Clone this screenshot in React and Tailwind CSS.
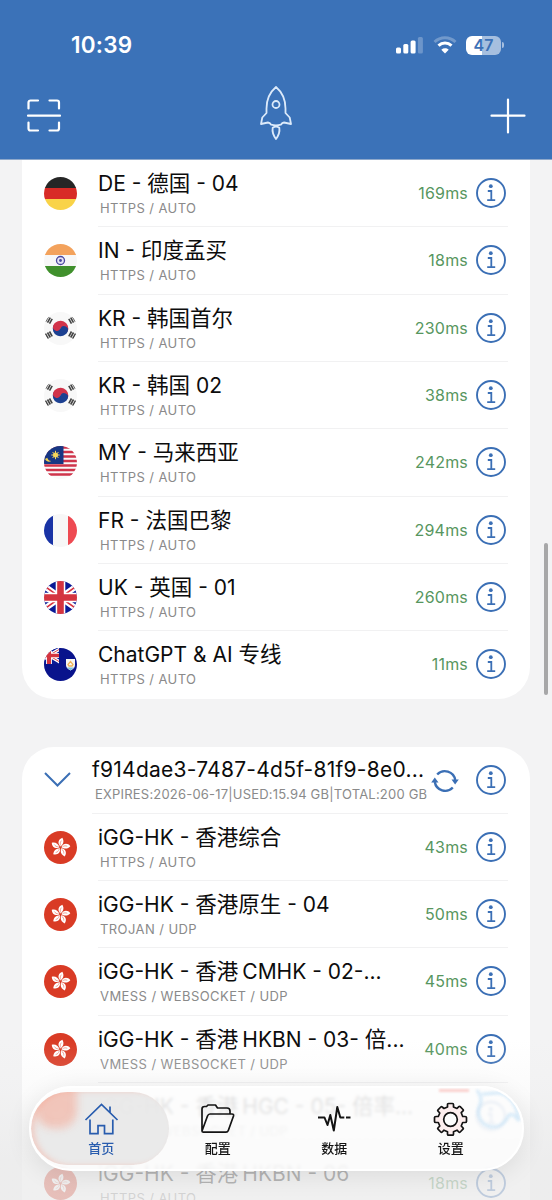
import { Fragment } from 'react';

const servers = [
  { flag: 'de', name: 'DE - 德国 - 04', type: 'HTTPS / AUTO', ping: '169ms' },
  { flag: 'in', name: 'IN - 印度孟买', type: 'HTTPS / AUTO', ping: '18ms' },
  { flag: 'kr', name: 'KR - 韩国首尔', type: 'HTTPS / AUTO', ping: '230ms' },
  { flag: 'kr', name: 'KR - 韩国 02', type: 'HTTPS / AUTO', ping: '38ms' },
  { flag: 'my', name: 'MY - 马来西亚', type: 'HTTPS / AUTO', ping: '242ms' },
  { flag: 'fr', name: 'FR - 法国巴黎', type: 'HTTPS / AUTO', ping: '294ms' },
  { flag: 'uk', name: 'UK - 英国 - 01', type: 'HTTPS / AUTO', ping: '260ms' },
  { flag: 'ai', name: 'ChatGPT & AI 专线', type: 'HTTPS / AUTO', ping: '11ms' },
];

const subscription = [
  { flag: 'hk', name: 'iGG-HK - 香港综合', type: 'HTTPS / AUTO', ping: '43ms' },
  { flag: 'hk', name: 'iGG-HK - 香港原生 - 04', type: 'TROJAN / UDP', ping: '50ms' },
  { flag: 'hk', name: 'iGG-HK - 香港CMHK - 02-...', type: 'VMESS / WEBSOCKET / UDP', ping: '45ms' },
  { flag: 'hk', name: 'iGG-HK - 香港HKBN - 03- 倍...', type: 'VMESS / WEBSOCKET / UDP', ping: '40ms' },
  { flag: 'hk', name: 'iGG-HK - 香港HGC - 05- 倍率...', type: 'VMESS / WEBSOCKET / UDP', ping: '' },
  { flag: 'hk', name: 'iGG-HK - 香港HKBN - 06', type: 'HTTPS / AUTO', ping: '18ms' },
];

function UnionJack() {
  return (
    <>
      <rect width="33" height="33" fill="#0a1a96" />
      <path d="M-4 2 37 31M37 2-4 31" stroke="#fff" strokeWidth="6" />
      <path d="M-4 2 37 31M37 2-4 31" stroke="#d8323f" strokeWidth="1.6" />
      <path d="M16.5 0V33M0 16.5H33" stroke="#fff" strokeWidth="9.6" />
      <path d="M16.5 0V33M0 16.5H33" stroke="#d43440" strokeWidth="6.6" />
    </>
  );
}

const flags = {
  de: (
    <>
      <rect width="33" height="11" fill="#262626" />
      <rect y="11" width="33" height="11" fill="#d82b27" />
      <rect y="22" width="33" height="11" fill="#f9d348" />
    </>
  ),
  in: (
    <>
      <rect width="33" height="11" fill="#f3a25c" />
      <rect y="11" width="33" height="11" fill="#f7f7f7" />
      <rect y="22" width="33" height="11" fill="#40902c" />
      <circle cx="16.5" cy="16.5" r="4" fill="#e4e4f4" stroke="#4a479f" strokeWidth="1.3" />
      <circle cx="16.5" cy="16.5" r="1.4" fill="#4a479f" />
    </>
  ),
  kr: (
    <>
      <rect width="33" height="33" fill="#f8f8f8" />
      <g transform="rotate(25 16.5 16.5)">
        <path d="M8.7 16.5a7.8 7.8 0 0 1 15.6 0z" fill="#d2334a" />
        <path d="M8.7 16.5a7.8 7.8 0 0 0 15.6 0z" fill="#1c4091" />
        <circle cx="12.6" cy="16.5" r="3.9" fill="#d2334a" />
        <circle cx="20.4" cy="16.5" r="3.9" fill="#1c4091" />
      </g>
      <g stroke="#444" strokeWidth="1.6">
        <path d="M1.4 9.600 4.300 4.600M3.500 10.700 6.300 5.700M5.500 11.700 8.200 6.900" />
        <path d="M31.600 9.600 28.700 4.600M29.500 10.700 26.700 5.700M27.500 11.700 24.800 6.900" />
        <path d="M1.400 21.600 4.300 26.600M3.500 20.500 6.300 25.500M5.500 19.500 8.200 24.300" />
        <path d="M31.600 21.600 28.700 26.600M29.500 20.500 26.700 25.500M27.500 19.500 24.800 24.300" />
      </g>
    </>
  ),
  my: (
    <>
      <rect width="33" height="33" fill="#fafafa" />
      <path d="M0 1.5H33M0 6H33M0 10.5H33M0 15H33M0 19.5H33M0 24H33M0 28.5H33" stroke="#cf354b" strokeWidth="2.3" />
      <rect width="19.5" height="18" fill="#173784" />
      <path d="M1 13c1.500 3 4.500 3.200 6.300 2-2.500-.2-3.500-1.600-4-3.300z" fill="#f2d04d" />
      <circle cx="11.500" cy="9" r="2.500" fill="#f6d75b" />
      <path d="M11.500 4.800v8.400M7.300 9h8.400M8.500 6l6 6M14.500 6l-6 6" stroke="#f6d75b" strokeWidth="1" />
    </>
  ),
  fr: (
    <>
      <rect width="9.500" height="33" fill="#1933a5" />
      <rect x="9" width="15" height="33" fill="#f7f7f7" />
      <rect x="24" width="9" height="33" fill="#ee4a52" />
    </>
  ),
  uk: <UnionJack />,
  ai: (
    <>
      <rect width="33" height="33" fill="#09138c" />
      <svg x="-5" y="-1" width="20" height="17" viewBox="0 0 33 33" preserveAspectRatio="none">
        <UnionJack />
      </svg>
      <path d="M22 11h9v6c0 3-2.500 4.500-4.500 5.500C24.500 21.500 22 20 22 17z" fill="#f6f6f2" />
      <path d="M23 19.500h7l-3.500 3z" fill="#78bde0" />
      <path d="M24 16.500l2.500-3 2.500 3-1 1.500h-3z" fill="none" stroke="#f0b35a" strokeWidth="1.300" />
    </>
  ),
  hk: (
    <>
      <rect width="33" height="33" fill="#d93b25" />
      {[0, 72, 144, 216, 288].map((a) => (
        <g key={a} transform={`rotate(${a + 8} 16.5 16.5)`}>
          <path d="M16.300 15.500C12.500 13 13.200 8.500 17 6.600c2.200 2.800 2.200 6-.7 8.900z" fill="#fff" />
          <path d="M16.300 14.500c-1-1.700-.8-3.500.2-4.900" fill="none" stroke="#e98577" strokeWidth=".7" />
        </g>
      ))}
    </>
  ),
};

function Flag({ code }) {
  return (
    <span className="block size-[33px] shrink-0 overflow-hidden rounded-full">
      <svg viewBox="0 0 33 33" className="block size-[33px]">{flags[code]}</svg>
    </span>
  );
}

function InfoIcon() {
  return (
    <svg viewBox="0 0 30 30" className="size-[30px] shrink-0" fill="none" stroke="#3b6fb5">
      <circle cx="15" cy="15" r="14" strokeWidth="1.9" />
      <circle cx="14.800" cy="8.200" r="1.900" fill="#3b6fb5" stroke="none" />
      <path d="M11.800 13h3.500v9M11.200 22.200h8" strokeWidth="1.800" />
    </svg>
  );
}

// Han glyphs run slightly larger than the Latin ones, with a thin gap before a letter
function Title({ children, className = '' }) {
  const parts = children.split(/([\u4e00-\u9fff]+)/);
  return (
    <div className={`h-7 whitespace-nowrap text-[21px] leading-7 text-[#0c0c0c] ${className}`}>
      {parts.map((part, i) => (
        <Fragment key={i}>
          {i % 2 ? (
            <span className={`font-['Noto_Sans_CJK_SC',sans-serif] text-[21.5px] leading-none ${/^[A-Z]/.test(parts[i + 1]) ? 'mr-[4px]' : ''}`}>
              {part}
            </span>
          ) : (
            part
          )}
        </Fragment>
      ))}
    </div>
  );
}

function ServerRow({ server, last }) {
  return (
    <div className="flex h-[67.33px] items-center pl-[22px] pr-[22px]">
      <Flag code={server.flag} />
      <div className={`ml-[21px] flex h-full flex-1 items-center border-b ${last ? 'border-transparent' : 'border-[#f1f1f2]'}`}>
        <div className="min-w-0 flex-1 self-start pt-[10px]">
          <Title>{server.name}</Title>
          <div className="mt-[2px] pl-[2px] text-[13px] leading-4 tracking-[0.42px] whitespace-nowrap text-[#8a8a8a]">{server.type}</div>
        </div>
        <span className="mr-2 text-[16px] tracking-[0.2px] text-[#579660]">{server.ping}</span>
        <InfoIcon />
        <span className="w-[2px]" />
      </div>
    </div>
  );
}

function StatusBar() {
  return (
    <div className="flex h-[72px] items-center justify-between pl-[71px] pr-[48px] pt-[18px] text-white">
      <span className="text-[22.5px] font-semibold leading-none tracking-[0.2px]">10:39</span>
      <div className="flex items-center">
        <svg viewBox="0 0 28 18" className="h-[18px] w-[28px]" fill="#fff">
          <rect x="0" y="11.500" width="5" height="6" rx="1.500" />
          <rect x="7.300" y="8" width="5" height="9.500" rx="1.500" />
          <rect x="14.600" y="4.500" width="5" height="13" rx="1.500" />
          <rect x="21.900" y="1" width="5" height="16.500" rx="1.500" opacity=".25" />
        </svg>
        <svg viewBox="0 0 24 18" className="ml-[9px] h-[18px] w-[24px]" fill="none" stroke="#fff">
          <path d="M1.500 6C7.500.400 16.500.400 22.500 6" strokeWidth="3" opacity=".28" />
          <path d="M5.500 9.700c3.800-3.600 9.200-3.600 13 0" strokeWidth="3" />
          <path d="M12 17.500 8.300 13.700c2.200-1.900 5.200-1.900 7.400 0z" fill="#fff" stroke="none" />
        </svg>
        <div className="ml-[9px] flex h-[19px] w-[35px] items-center justify-center rounded-[6px] bg-linear-to-r from-white from-47% to-[#a6bfdf] to-47% text-[16px] font-semibold leading-none text-[#3c71b7]">
          47
        </div>
        <span className="ml-[1px] h-[6px] w-[2px] rounded-r-full bg-[#a6bfdf]" />
      </div>
    </div>
  );
}

function Header() {
  return (
    <header className="h-[160px] border-b border-[#8fa9cb] bg-[#3b72b8]">
      <StatusBar />
      <div className="flex h-[87px] items-center justify-between pl-[26px] pr-[26px]">
        <svg viewBox="0 0 36 36" className="size-[36px]" fill="none" stroke="#fff" strokeWidth="2.200" strokeLinecap="round">
          <path d="M2.500 10.500V4.500a2 2 0 0 1 2-2H12M23.500 2.500h7.500a2 2 0 0 1 2 2v6M33 24.500v6a2 2 0 0 1-2 2h-7.500M12 32.500H4.500a2 2 0 0 1-2-2v-6M2 17.700h32" />
        </svg>
        <svg viewBox="0 0 34 56" className="mb-[5px] h-[56px] w-[34px]" fill="none" stroke="#dceafa" strokeWidth="1.800" strokeLinejoin="round">
          <path d="M17 2C10.500 7.500 7.500 15 7.500 23.500v4.500L3.300 32.500l-1.300 6.500 7-1.500c1 0 2 .300 3.200 2.200 3 .800 6.600.800 9.600 0C23 37.800 24 37.500 25 37.500l7 1.500-1.300-6.500L26.500 28v-4.500C26.500 15 23.500 7.500 17 2z" />
          <circle cx="17" cy="19.500" r="3.500" />
          <path d="M13.700 42.700c2-1.400 4.600-1.400 6.600 0 .700 4-.800 8-3.300 11.300-2.500-3.300-4-7.300-3.300-11.300z" />
        </svg>
        <svg viewBox="0 0 36 36" className="size-[36px]" stroke="#fff" strokeWidth="2.200" strokeLinecap="round">
          <path d="M18 1.500v33M1.500 17.700h33" />
        </svg>
      </div>
    </header>
  );
}

function GroupHeader() {
  return (
    <div className="flex h-[67px] items-center pl-[21px] pr-[22px]">
      <svg viewBox="0 0 30 18" className="h-[18px] w-[30px]" fill="none" stroke="#3b6fb5" strokeWidth="2">
        <path d="M2 2 14.500 14.500 27 2" />
      </svg>
      <div className="ml-[19px] flex h-full flex-1 items-center border-b border-[#f1f1f2]">
        <div className="w-[338px] self-start pt-[9px]">
          <Title className="tracking-[0.25px]">f914dae3-7487-4d5f-81f9-8e0...</Title>
          <div className="mt-[2px] pl-[3px] text-[13px] leading-4 tracking-[0.2px] whitespace-nowrap text-[#8a8a8a]">
            EXPIRES:2026-06-17|USED:15.94 GB|TOTAL:200 GB
          </div>
        </div>
        <svg viewBox="0 0 28 28" className="mt-[2px] ml-[1px] size-[28px] shrink-0" fill="none" stroke="#3b6fb5" strokeWidth="2.400">
          <path d="M6.200 7.500a10.500 10.500 0 0 1 18 5.500M21.800 20.500a10.500 10.500 0 0 1-18-5.500" />
          <path d="M20.500 12.500h7.300l-3.700 5zM.200 15.500h7.300l-3.700-5z" fill="#3b6fb5" stroke="none" />
        </svg>
        <span className="flex-1" />
        <InfoIcon />
        <span className="w-[2px]" />
      </div>
    </div>
  );
}

const tabs = [
  {
    label: '首页',
    icon: <path d="M1.500 18 17.500 2.500 33.500 18M6 17.500v14.200h8v-8h6.500v8h8.300V17.500M26 10.500v-6" />,
  },
  {
    label: '配置',
    icon: (
      <path
        d="M2 29V7q0-2.500 2.500-2.500h2L8 3h7.500l2 3H27q3 0 3 3v3M2 29l5.500-15Q8.300 12 10 12h22q2 0 1.500 2l-5.200 14.500q-.600 1.700-2.300 1.700H3.500Q2 30.200 2 29z"
        strokeLinejoin="round"
      />
    ),
  },
  {
    label: '数据',
    icon: <path d="M1 15.500h6.500l3 7.500 2.800-10 3.500 15.500 3.500-23.500 3 10.500h4M29 15.500h4.500" strokeWidth="2" strokeLinejoin="round" />,
  },
  {
    label: '设置',
    icon: (
      <>
        <path
          d="M14.500 5V2.500Q14.500 1.500 15.500 1.500h4q1 0 1 1V5l3.500 1.500 1.800-1.800q.700-.700 1.400 0l2.800 2.800q.700.700 0 1.400l-1.800 1.800L29.700 14.500h2.300q1.500 0 1.500 1v4q0 1-1.500 1h-2.300L28.200 24l1.800 1.800q.700.700 0 1.400L27.200 30q-.700.700-1.400 0L24 28.200l-3.500 1.500v2.500q0 1-1 1h-4q-1 0-1-1v-2.500L11 28.200 9.200 30q-.700.700-1.400 0L5 27.200q-.700-.700 0-1.400L6.800 24l-1.500-3.500H3q-1.500 0-1.500-1v-4q0-1 1.500-1h2.300L6.800 11 5 9.200q-.700-.700 0-1.400L7.800 5q.700-.700 1.400 0L11 6.500z"
          fill="#fdeeee"
          strokeLinejoin="round"
        />
        <circle cx="17.500" cy="17.500" r="6.800" fill="#fdfdfd" />
      </>
    ),
  },
];

function TabBar() {
  return (
    <nav className="absolute left-[29px] top-[1086px] h-[85px] w-[495px] overflow-hidden rounded-full border-2 border-white bg-[#fdfdfd]/84 shadow-[0_4px_26px_rgba(0,0,0,0.09)] backdrop-blur-[1.5px]">
      <div className="absolute left-0 top-[4px] h-[73px] w-[138px] overflow-hidden rounded-full bg-[#e8e8e8]/90 shadow-[inset_4px_0_5px_rgba(248,161,139,0.35)]">
        <div className="absolute -top-4 left-[4px] h-[52px] w-[42px] rounded-[18px] bg-[#f8a18b]/50 blur-[4px]" />
      </div>
      {/* glass refraction of the row underneath */}
      <svg viewBox="0 0 50 44" className="absolute right-0 top-0 h-[44px] w-[50px] opacity-60 blur-[1.5px]" fill="none" stroke="#b9dcf5" strokeWidth="3">
        <path d="M5 2c4 6 5 9 3 15-5 10 2 22 13 22 9 0 13-6 16-12 4-2 7 1 10 6M10 6c10 0 18-4 26 3 7 6 10 13 11 24" />
      </svg>
      <div className="absolute left-[408px] top-[1px] h-[3px] w-[30px] bg-[#f7a6a0]/50 blur-[1px]" />
      <div className="relative flex px-[12px] pt-[14px]">
        {tabs.map((tab, i) => (
          <div key={tab.label} className={`flex w-[116.500px] flex-col items-center ${i === 0 ? 'text-[#285cae]' : 'text-[#141414]'}`}>
            <svg viewBox="0 0 35 35" className="size-[35px]" fill="none" stroke="currentColor" strokeWidth="1.700">
              {tab.icon}
            </svg>
            <span className="mt-[3px] text-[13px] font-medium leading-4">{tab.label}</span>
          </div>
        ))}
      </div>
    </nav>
  );
}

export default function App() {
  return (
    <div className="relative h-[1200px] w-[552px] overflow-hidden bg-[#f3f3f4] font-['Inter','Noto_Sans_CJK_SC',sans-serif]">
      <Header />
      <main className="px-[22px]">
        <section className="rounded-b-[32px] bg-white">
          {servers.map((s, i) => (
            <ServerRow key={s.name} server={s} last={i === servers.length - 1} />
          ))}
        </section>
        <section className="mt-[48px] rounded-t-[32px] bg-white">
          <GroupHeader />
          {subscription.map((s) => (
            <ServerRow key={s.name} server={s} />
          ))}
        </section>
      </main>
      <div className="absolute inset-x-0 bottom-0 h-[160px] bg-linear-to-b from-[#ececec]/0 via-[#ececec]/20 via-30% to-[#ebebeb]/75 to-75%" />
      <div className="absolute left-[544px] top-[543px] h-[152px] w-[4px] rounded-full bg-[#a7a7a8]" />
      <TabBar />
    </div>
  );
}
